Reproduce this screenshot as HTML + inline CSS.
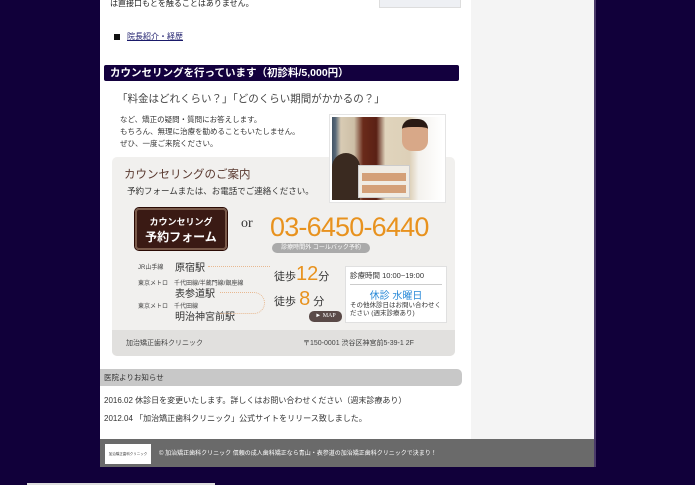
<!DOCTYPE html>
<html><head><meta charset="utf-8"><style>
*{margin:0;padding:0;box-sizing:border-box}
body{width:695px;height:485px;background:#11003a;position:relative;overflow:hidden;font-family:"Liberation Sans","Noto Sans CJK JP",sans-serif;color:#333}
.a{position:absolute;white-space:nowrap}
</style></head><body>
<div class="a" style="left:100px;top:0;width:371px;height:439px;background:#fff"></div>
<div class="a" style="left:471px;top:0;width:123px;height:439px;background:#f4f4f4"></div>
<div class="a" style="left:594px;top:0;width:2px;height:467px;background:#4a3a6a"></div>
<div class="a" style="left:379px;top:0;width:82px;height:8px;background:#eef0f4;border:1px solid #ddd;border-top:0"></div>
<div class="a" style="left:110px;top:-2px;font-size:8px;color:#222">は直接口もとを触ることはありません。</div>
<div class="a" style="left:114px;top:34px;width:6px;height:6px;background:#111"></div>
<div class="a" style="left:127px;top:31px;font-size:8px;color:#1a1a6a;text-decoration:underline">院長紹介・経歴</div>
<div class="a" style="left:104px;top:65px;width:355px;height:16px;background:#13003e;border-radius:2px;color:#fff;font-size:10.5px;font-weight:bold;line-height:16px;padding-left:6px">カウンセリングを行っています（初診料/5,000円）</div>
<div class="a" style="left:117px;top:91px;font-size:10.5px;color:#444">「料金はどれくらい？」「どのくらい期間がかかるの？」</div>
<div class="a" style="left:120px;top:114px;font-size:7.5px;line-height:12px;color:#333">など、矯正の疑問・質問にお答えします。<br>もちろん、無理に治療を勧めることもいたしません。<br>ぜひ、一度ご来院ください。</div>
<div class="a" style="left:112px;top:157px;width:343px;height:199px;background:#f1f0ee;border-radius:5px;overflow:hidden">
 <div class="a" style="left:0;top:173px;width:343px;height:26px;background:#e1e0de"></div>
</div>
<div class="a" style="left:329px;top:114px;width:117px;height:89px;background:#fff;border:1px solid #e4e4e4"></div>
<div class="a" style="left:332px;top:117px;width:111px;height:83px;background:linear-gradient(90deg,#456 0,#567 3%,#d8cbb4 8%,#cdbfa6 20%,#6a2a1a 28%,#5a2014 40%,#e0d4bc 48%,#ddd0b8 70%,#f4f2ee 78%,#fff 100%);overflow:hidden">
 <div class="a" style="left:0;top:36px;width:28px;height:47px;background:#3a2a20;border-radius:14px 14px 0 0"></div>
 <div class="a" style="left:26px;top:48px;width:52px;height:33px;background:#f0ece4;border:1px solid #ccc"></div>
 <div class="a" style="left:30px;top:56px;width:44px;height:8px;background:#c8804a;opacity:.7"></div>
 <div class="a" style="left:30px;top:68px;width:44px;height:8px;background:#c8804a;opacity:.7"></div>
 <div class="a" style="left:70px;top:2px;width:26px;height:32px;background:#d8a888;border-radius:10px;border-top:8px solid #2a1a14"></div>
</div>
<div class="a" style="left:124px;top:166px;font-size:11.5px;color:#5a3a30">カウンセリングのご案内</div>
<div class="a" style="left:127px;top:185px;font-size:8.5px;color:#333">予約フォームまたは、お電話でご連絡ください。</div>
<div class="a" style="left:135px;top:208px;width:92px;height:42px;background:#3a1a14;border:2px solid #7a5a4a;border-radius:4px;outline:1px solid #2a0a04;color:#fff;text-align:center;font-weight:bold;font-size:9px;line-height:13px;padding-top:6px">カウンセリング<br><span style="font-size:12px;line-height:16px">予約フォーム</span></div>
<div class="a" style="left:241px;top:216px;font-size:14px;font-family:'Liberation Serif',serif;color:#333">or</div>
<div class="a" style="left:270px;top:212px;font-size:27px;color:#e8921e;letter-spacing:-0.8px">03-6450-6440</div>
<div class="a" style="left:272px;top:243px;width:98px;height:10px;background:#aaa;border-radius:5px;color:#fff;font-size:6px;line-height:10px;text-align:center">診療時間外 コールバック予約</div>
<div class="a" style="left:138px;top:262px;font-size:6px;color:#444">JR山手線</div>
<div class="a" style="left:175px;top:259px;font-size:10px;color:#333">原宿駅</div>
<div class="a" style="left:138px;top:278px;font-size:6px;color:#444">東京メトロ　千代田線/半蔵門線/銀座線</div>
<div class="a" style="left:175px;top:285px;font-size:10px;color:#333">表参道駅</div>
<div class="a" style="left:138px;top:301px;font-size:6px;color:#444">東京メトロ　千代田線</div>
<div class="a" style="left:175px;top:308px;font-size:10px;color:#333">明治神宮前駅</div>
<div class="a" style="left:208px;top:266px;width:62px;border-top:1px dotted #e8b890"></div>
<div class="a" style="left:220px;top:292px;width:45px;height:22px;border-top:1px dotted #e8b890;border-right:1px dotted #e8b890;border-bottom:1px dotted #e8b890;border-radius:0 20px 20px 0"></div>
<div class="a" style="left:274px;top:263px;font-size:11px;color:#333">徒歩<span style="font-size:20px;color:#e8921e">12</span>分</div>
<div class="a" style="left:274px;top:288px;font-size:11px;color:#333">徒歩 <span style="font-size:20px;color:#e8921e">8</span> 分</div>
<div class="a" style="left:309px;top:311px;width:33px;height:11px;background:#5a4a48;border-radius:5px;color:#fff;font-size:6px;line-height:11px;text-align:center;font-family:'Liberation Serif',serif">► MAP</div>
<div class="a" style="left:345px;top:266px;width:102px;height:57px;background:#fff;border:1px solid #e0e0e0;padding:3px 4px">
 <div style="font-size:7.5px;color:#333;border-bottom:1px solid #ccc;padding-bottom:3px">診療時間 10:00~19:00</div>
 <div style="font-size:10px;color:#2a8ad8;text-align:center;margin-top:2px">休診 水曜日</div>
 <div style="font-size:6.5px;color:#333;line-height:8px;white-space:normal">その他休診日はお問い合わせください (週末診療あり)</div>
</div>
<div class="a" style="left:126px;top:338px;font-size:7px;color:#444">加治矯正歯科クリニック</div>
<div class="a" style="left:303px;top:338px;font-size:7px;color:#444">〒150-0001 渋谷区神宮前5-39-1 2F</div>
<div class="a" style="left:100px;top:369px;width:362px;height:17px;background:#c8c8c8;border-radius:0 5px 5px 0;font-size:7.5px;line-height:17px;padding-left:4px;color:#333">医院よりお知らせ</div>
<div class="a" style="left:104px;top:395px;font-size:8px;color:#333">2016.02 休診日を変更いたします。詳しくはお問い合わせください（週末診療あり）</div>
<div class="a" style="left:104px;top:413px;font-size:8px;color:#333">2012.04 「加治矯正歯科クリニック」公式サイトをリリース致しました。</div>
<div class="a" style="left:100px;top:439px;width:494px;height:28px;background:#6a6a6a"></div>
<div class="a" style="left:105px;top:444px;width:46px;height:20px;background:#fff;font-size:3.5px;line-height:20px;text-align:center;color:#333">加治矯正歯科クリニック</div>
<div class="a" style="left:159px;top:448px;font-size:6px;color:#fff">© 加治矯正歯科クリニック 信頼の成人歯科矯正なら青山・表参道の加治矯正歯科クリニックで決まり！</div>
<div class="a" style="left:27px;top:483px;width:188px;height:2px;background:#ddd"></div>
</body></html>
